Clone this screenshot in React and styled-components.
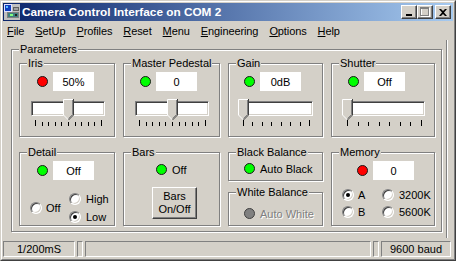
import React from "react";
import styled, { createGlobalStyle } from "styled-components";

const FACE = "#D4D0C8";

const Global = createGlobalStyle`
  html, body { margin: 0; padding: 0; background: ${FACE}; }
  body { font-family: "Liberation Sans", Arial, sans-serif; font-size: 11px; color: #000; }
  * { box-sizing: border-box; }
`;

const Window = styled.div`
  width: 456px;
  height: 261px;
  background: ${FACE};
  border: 1px solid;
  border-color: ${FACE} #404040 #404040 ${FACE};
  display: flex;
`;

const Frame = styled.div`
  flex: 1;
  border: 1px solid;
  border-color: #fff #808080 #808080 #fff;
  padding: 1px;
  display: flex;
  flex-direction: column;
  min-width: 0;
`;

const TitleBar = styled.div`
  height: 18px;
  flex: none;
  display: flex;
  align-items: center;
  padding: 0 2px 0 1px;
  background: linear-gradient(to right, #0a246a, #a6caf0);
`;

const TitleText = styled.span`
  flex: 1;
  margin-left: 2px;
  color: #fff;
  font-weight: bold;
  font-size: 11.8px;
  white-space: nowrap;
`;

const CaptionButtons = styled.div`
  display: flex;
  align-items: center;
`;

const CaptionButton = styled.div`
  width: 16px;
  height: 14px;
  margin-left: ${(p) => (p.$gap ? "2px" : "0")};
  background: ${FACE};
  border: 1px solid;
  border-color: #fff #404040 #404040 #fff;
  box-shadow: inset -1px -1px 0 #808080;
  display: flex;
  align-items: center;
  justify-content: center;
`;

const MenuBar = styled.div`
  height: 19px;
  flex: none;
  display: flex;
  align-items: center;
  gap: 11px;
  padding-left: 4px;
`;

const MenuItem = styled.span`
  white-space: nowrap;
  letter-spacing: -0.1px;
  u { text-decoration: underline; text-underline-offset: 1px; }
`;

const Client = styled.div`
  flex: 1;
  display: flex;
  flex-direction: column;
  margin-right: 6px;
  padding: 9px 0 6px 8px;
  border-right: 1px solid #808080;
  box-shadow: 1px 0 0 #fff;
`;

const GroupBox = styled.div`
  position: relative;
  width: ${(p) => p.$w}px;
  height: ${(p) => p.$h}px;
  border: 1px solid #808080;
  box-shadow: inset 1px 1px 0 #fff, 1px 1px 0 #fff;
  padding: ${(p) => p.$pad || "0"};
`;

const GroupLabel = styled.span`
  position: absolute;
  top: -7px;
  left: 7px;
  padding: 0 1px;
  line-height: 13px;
  background: ${FACE};
  white-space: nowrap;
`;

const ParamGrid = styled.div`
  display: grid;
  grid-template-columns: 96px 97px 95px 104px;
  grid-template-rows: 74px 74px;
  column-gap: 8px;
  row-gap: 15px;
`;

const Stack = styled.div`
  display: flex;
  flex-direction: column;
  gap: 11px;
`;

const Row = styled.div`
  display: flex;
  align-items: center;
  gap: ${(p) => p.$gap ?? 5}px;
  height: ${(p) => p.$h ?? 19}px;
`;

const Led = styled.span`
  flex: none;
  width: 11px;
  height: 11px;
  border-radius: 50%;
  background: ${(p) => p.$color};
  border: 1px solid ${(p) => p.$edge || "#1a1a1a"};
`;

const ValueBox = styled.div`
  width: ${(p) => p.$w || 41}px;
  height: 19px;
  background: #fff;
  display: flex;
  align-items: center;
  justify-content: center;
`;

const Text = styled.span`
  white-space: nowrap;
  color: ${(p) => (p.$disabled ? "#808080" : "#000")};
  text-shadow: ${(p) => (p.$disabled ? "1px 1px 0 #fff" : "none")};
`;

const SliderWrap = styled.div`
  position: relative;
  width: ${(p) => p.$w}px;
  margin-top: 10px;
  margin-left: ${(p) => p.$ml}px;
`;

const Track = styled.div`
  height: 15px;
  background: #fff;
  border: 1px solid;
  border-color: #808080 #fff #fff #808080;
  box-shadow: inset 1px 1px 0 #404040, inset -1px -1px 0 ${FACE};
`;

const Thumb = styled.svg`
  position: absolute;
  top: -2px;
  display: block;
`;

const Ticks = styled.svg`
  display: block;
  margin-top: 4px;
`;

const RadioGrid = styled.div`
  display: grid;
  grid-template-columns: ${(p) => p.$cols};
  grid-auto-rows: ${(p) => p.$rowH}px;
  margin-left: ${(p) => p.$ml}px;
  margin-top: ${(p) => p.$mt}px;
`;

const RadioItem = styled.label`
  display: flex;
  align-items: center;
  gap: ${(p) => p.$gap ?? 4}px;
  grid-row: ${(p) => p.$row || "auto"};
  white-space: nowrap;
`;

const RadioCircle = styled.span`
  flex: none;
  position: relative;
  width: 12px;
  height: 12px;
  border-radius: 50%;
  background: #fff;
  border: 1px solid;
  border-color: #808080 #fff #fff #808080;
  box-shadow: inset 1px 1px 0 #404040, inset -1px -1px 0 ${FACE};
  &::after {
    content: "";
    display: ${(p) => (p.$checked ? "block" : "none")};
    position: absolute;
    left: 3px;
    top: 3px;
    width: 4px;
    height: 4px;
    border-radius: 50%;
    background: #000;
  }
`;

const PushButton = styled.div`
  width: 45px;
  height: 32px;
  margin-left: ${(p) => p.$ml}px;
  margin-top: 10px;
  background: ${FACE};
  border: 1px solid;
  border-color: #fff #404040 #404040 #fff;
  box-shadow: inset -1px -1px 0 #808080;
  display: flex;
  align-items: center;
  justify-content: center;
  text-align: center;
  line-height: 13px;
`;

const StatusBar = styled.div`
  height: 20px;
  flex: none;
  display: flex;
  gap: 2px;
  padding: 3px 2px 1px 0;
`;

const StatusPanel = styled.div`
  flex: ${(p) => (p.$w ? "none" : "1")};
  width: ${(p) => (p.$w ? `${p.$w}px` : "auto")};
  height: 16px;
  border: 1px solid;
  border-color: #808080 #fff #fff #808080;
  display: flex;
  align-items: center;
  justify-content: center;
  white-space: nowrap;
`;

function AppIcon() {
  return (
    <svg width="16" height="16" viewBox="0 0 16 16">
      <rect x="0" y="0" width="16" height="16" fill="#c0c0c0" />
      <rect x="0.5" y="0.5" width="7" height="7" fill="#1040c0" stroke="#e0e0ff" />
      <rect x="2" y="2" width="2" height="2" fill="#60c0ff" />
      <rect x="3" y="8" width="12" height="6" fill="#808080" />
      <rect x="4" y="9" width="10" height="4" fill="#408080" />
      <rect x="6" y="10" width="3" height="2" fill="#80ff80" />
      <rect x="11" y="10" width="2" height="2" fill="#202020" />
      <rect x="9" y="3" width="6" height="4" fill="#606060" />
      <rect x="10" y="4" width="4" height="2" fill="#a0a0a0" />
    </svg>
  );
}

function Slider({ w, ml, ticks, value }) {
  const span = w - 8;
  const pos = 4 + value * span;
  const tickXs = Array.from({ length: ticks }, (_, i) => Math.round(4 + (i * span) / (ticks - 1)));
  return (
    <SliderWrap $w={w} $ml={ml}>
      <Track />
      <Thumb width="11" height="21" viewBox="0 0 11 21" style={{ left: Math.round(pos) - 5 }}>
        <polygon points="0,0 11,0 11,16 5.5,21 0,16" fill={FACE} />
        <polyline points="0.5,16 0.5,0.5 10,0.5" fill="none" stroke="#fff" />
        <line x1="0.5" y1="16" x2="5.5" y2="21" stroke="#fff" />
        <polyline points="10.5,0 10.5,16 5.5,21" fill="none" stroke="#404040" />
        <polyline points="9.5,1 9.5,15.5 5.5,19.5" fill="none" stroke="#808080" />
      </Thumb>
      <Ticks width={w} height="6" viewBox={`0 0 ${w} 6`}>
        {tickXs.map((x, i) => {
          const end = i === 0 || i === ticks - 1;
          return <rect key={i} x={x} y={end ? 0 : 2} width="1" height={end ? 6 : 4} fill="#000" />;
        })}
      </Ticks>
    </SliderWrap>
  );
}

function Radio({ label, checked, row, gap }) {
  return (
    <RadioItem $row={row} $gap={gap}>
      <RadioCircle $checked={checked} />
      <Text>{label}</Text>
    </RadioItem>
  );
}

function SliderGroup({ title, w, ledColor, value, ledLeft, sliderLeft, sliderW, ticks, pos }) {
  return (
    <GroupBox $w={w} $h={74} $pad={`8px 0 0 ${ledLeft}px`}>
      <GroupLabel>{title}</GroupLabel>
      <Row>
        <Led $color={ledColor} />
        <ValueBox>{value}</ValueBox>
      </Row>
      <Slider w={sliderW} ml={sliderLeft - ledLeft} ticks={ticks} value={pos} />
    </GroupBox>
  );
}

export default function App() {
  const menus = ["File", "SetUp", "Profiles", "Reset", "Menu", "Engineering", "Options", "Help"];
  return (
    <>
      <Global />
      <Window>
        <Frame>
          <TitleBar>
            <AppIcon />
            <TitleText>Camera Control Interface on COM 2</TitleText>
            <CaptionButtons>
              <CaptionButton>
                <svg width="8" height="8" viewBox="0 0 8 8">
                  <rect x="1" y="6" width="6" height="2" fill="#000" />
                </svg>
              </CaptionButton>
              <CaptionButton>
                <svg width="10" height="10" viewBox="0 0 10 10">
                  <rect x="1.5" y="1.5" width="8" height="8" fill="none" stroke="#fff" />
                  <rect x="1" y="1" width="8" height="1" fill="#fff" />
                  <rect x="0.5" y="0.5" width="8" height="8" fill="none" stroke="#808080" />
                  <rect x="0" y="0" width="9" height="2" fill="#808080" />
                </svg>
              </CaptionButton>
              <CaptionButton $gap>
                <svg width="8" height="7" viewBox="0 0 8 7">
                  <path d="M0 0h2l2 2 2-2h2L5 3.5 8 7H6L4 5 2 7H0l3-3.5z" fill="#000" />
                </svg>
              </CaptionButton>
            </CaptionButtons>
          </TitleBar>
          <MenuBar>
            {menus.map((m) => (
              <MenuItem key={m}>
                <u>{m[0]}</u>
                {m.slice(1)}
              </MenuItem>
            ))}
          </MenuBar>
          <Client>
            <GroupBox $w={431} $h={183} $pad="13px 0 0 7px">
              <GroupLabel>Parameters</GroupLabel>
              <ParamGrid>
                <SliderGroup title="Iris" w={96} ledColor="#ff0000" value="50%" ledLeft={17} sliderLeft={11} sliderW={74} ticks={11} pos={0.5} />
                <SliderGroup title="Master Pedestal" w={97} ledColor="#00ff00" value="0" ledLeft={16} sliderLeft={11} sliderW={74} ticks={11} pos={0.5} />
                <SliderGroup title="Gain" w={95} ledColor="#00ff00" value="0dB" ledLeft={15} sliderLeft={10} sliderW={74} ticks={8} pos={0} />
                <SliderGroup title="Shutter" w={104} ledColor="#00ff00" value="Off" ledLeft={16} sliderLeft={11} sliderW={82} ticks={8} pos={0} />

                <GroupBox $w={96} $h={74} $pad="8px 0 0 17px">
                  <GroupLabel>Detail</GroupLabel>
                  <Row>
                    <Led $color="#00ff00" />
                    <ValueBox>Off</ValueBox>
                  </Row>
                  <RadioGrid $cols="39px auto" $rowH={18} $ml={-7} $mt={10}>
                    <Radio label="Off" row="1 / span 2" />
                    <Radio label="High" gap={5} />
                    <Radio label="Low" checked gap={5} />
                  </RadioGrid>
                </GroupBox>

                <GroupBox $w={97} $h={74} $pad="9px 0 0 32px">
                  <GroupLabel>Bars</GroupLabel>
                  <Row $h={15}>
                    <Led $color="#00ff00" />
                    <Text>Off</Text>
                  </Row>
                  <PushButton $ml={-4}>
                    Bars
                    <br />
                    On/Off
                  </PushButton>
                </GroupBox>

                <Stack>
                  <GroupBox $w={95} $h={29} $pad="8px 0 0 15px">
                    <GroupLabel>Black Balance</GroupLabel>
                    <Row $h={15}>
                      <Led $color="#00ff00" />
                      <Text>Auto Black</Text>
                    </Row>
                  </GroupBox>
                  <GroupBox $w={95} $h={34} $pad="13px 0 0 15px">
                    <GroupLabel>White Balance</GroupLabel>
                    <Row $h={15}>
                      <Led $color="#808080" $edge="#404040" />
                      <Text $disabled>Auto White</Text>
                    </Row>
                  </GroupBox>
                </Stack>

                <GroupBox $w={104} $h={74} $pad="8px 0 0 25px">
                  <GroupLabel>Memory</GroupLabel>
                  <Row>
                    <Led $color="#ff0000" />
                    <ValueBox>0</ValueBox>
                  </Row>
                  <RadioGrid $cols="40px auto" $rowH={17} $ml={-15} $mt={6}>
                    <Radio label="A" checked />
                    <Radio label="3200K" gap={5} />
                    <Radio label="B" />
                    <Radio label="5600K" gap={5} />
                  </RadioGrid>
                </GroupBox>
              </ParamGrid>
            </GroupBox>
          </Client>
          <StatusBar>
            <StatusPanel $w={72}>1/200mS</StatusPanel>
            <StatusPanel $w={6} />
            <StatusPanel />
            <StatusPanel $w={6} />
            <StatusPanel $w={70}>9600 baud</StatusPanel>
          </StatusBar>
        </Frame>
      </Window>
    </>
  );
}
